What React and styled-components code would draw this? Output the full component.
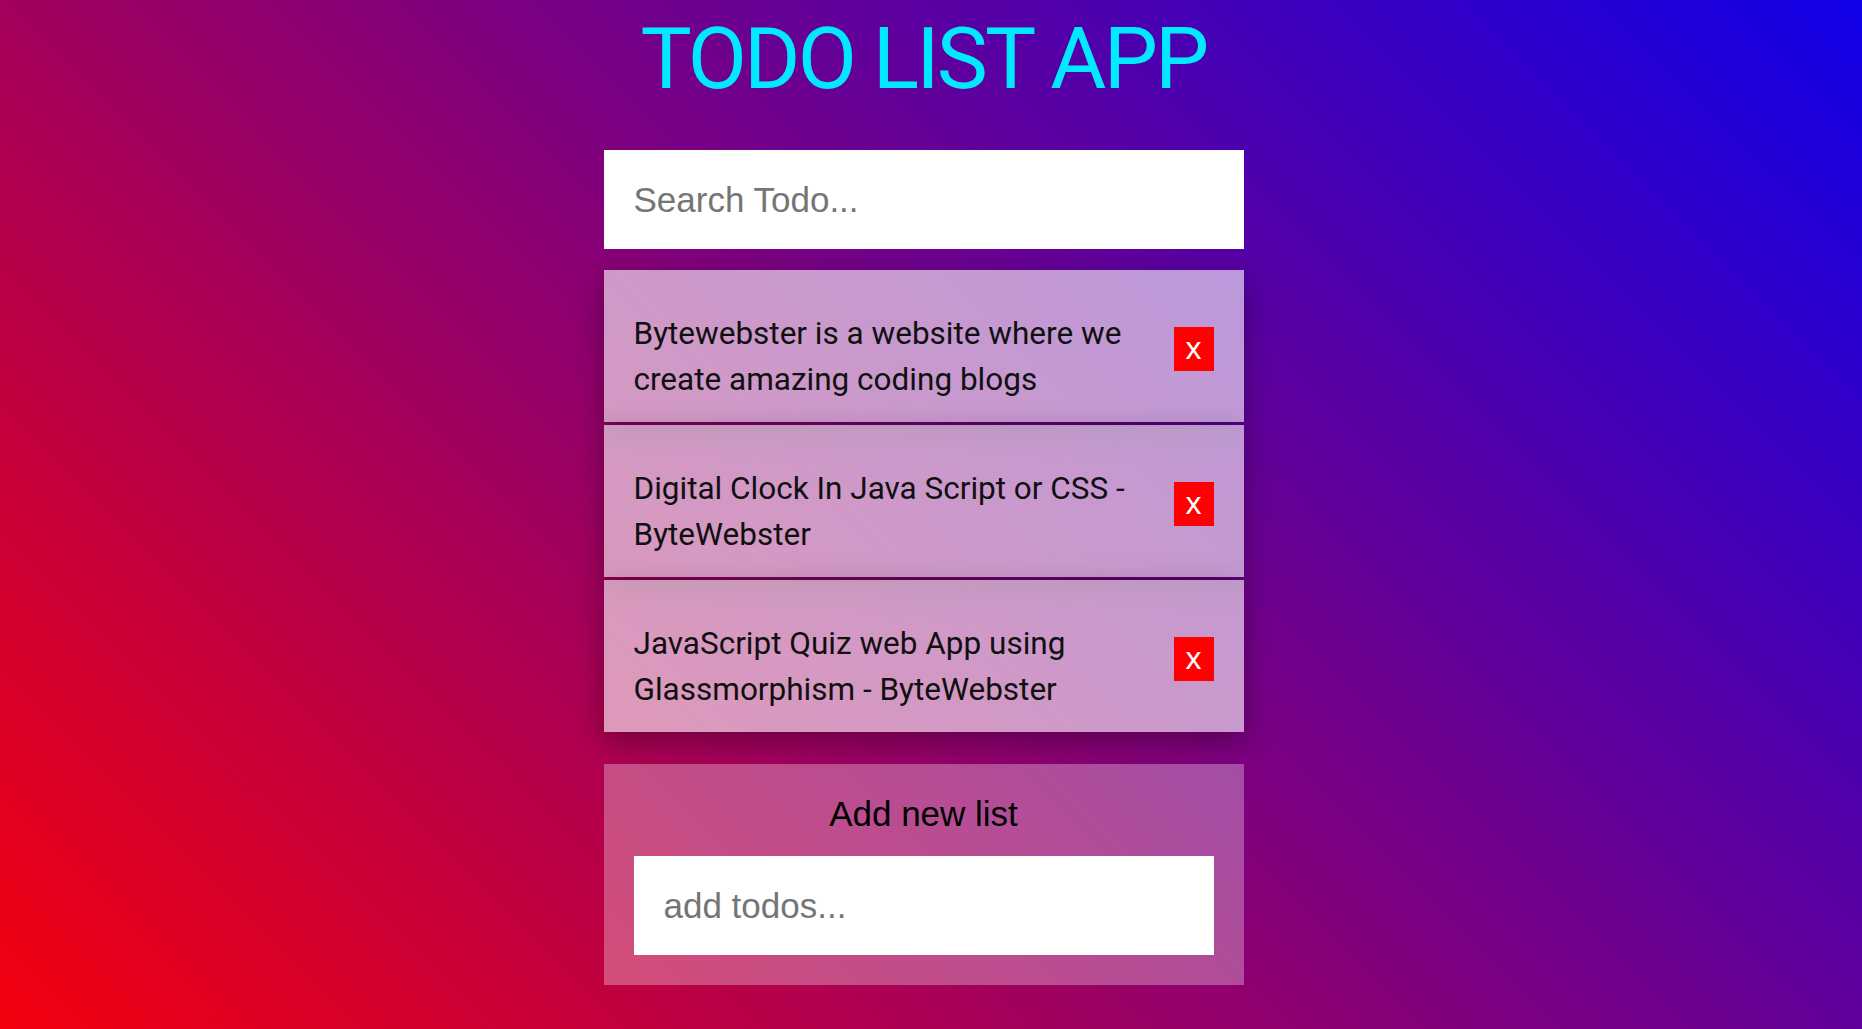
import React, { useState } from 'react';
import styled, { createGlobalStyle } from 'styled-components';

const GlobalStyle = createGlobalStyle`
  html, body {
    margin: 0;
    padding: 0;
  }
  * {
    box-sizing: border-box;
  }
`;

const Page = styled.div`
  min-height: 100vh;
  overflow: hidden;
  display: flex;
  flex-direction: column;
  align-items: center;
  padding: 9px 15px 0 0;
  background: linear-gradient(45deg, #f4000e, #1000e8);
  font-family: Roboto, "Liberation Sans", sans-serif;
`;

const Title = styled.h1`
  margin: 0;
  font-family: Roboto, "Open Sans", sans-serif;
  font-weight: 400;
  font-size: 86px;
  line-height: 100px;
  letter-spacing: -2.8px;
  color: #00eaff;
`;

const Container = styled.div`
  width: 640px;
  margin-top: 41px;
  display: flex;
  flex-direction: column;
`;

const TextInput = styled.input`
  display: block;
  width: 100%;
  height: 99px;
  padding: 0 30px;
  border: none;
  outline: none;
  background: #fff;
  font-family: "Liberation Sans", Arial, sans-serif;
  font-size: 35px;
  color: #222;
  &::placeholder {
    color: #757575;
  }
`;

const TodoList = styled.ul`
  list-style: none;
  margin: 21px 0 0;
  padding: 0;
  display: flex;
  flex-direction: column;
  gap: 3px;
`;

const TodoItem = styled.li`
  height: 152px;
  display: flex;
  align-items: center;
  justify-content: space-between;
  padding: 20px 30px;
  background: rgba(255, 255, 255, 0.6);
  box-shadow: 0 10px 28px rgba(0, 0, 0, 0.32);
`;

const TodoText = styled.span`
  max-width: 510px;
  padding-top: 21px;
  font-family: Roboto, sans-serif;
  font-size: 31.5px;
  line-height: 46px;
  color: #101010;
`;

const DeleteButton = styled.button`
  flex: none;
  width: 40px;
  height: 44px;
  margin-top: 5px;
  display: flex;
  align-items: center;
  justify-content: center;
  padding: 0;
  border: none;
  background: #ff0000;
  color: #fff;
  font-family: "Liberation Sans", Arial, sans-serif;
  font-size: 32px;
  cursor: pointer;
`;

const AddForm = styled.form`
  margin-top: 32px;
  padding: 30px;
  background: rgba(255, 255, 255, 0.3);
`;

const FormHeading = styled.h2`
  margin: 0 0 22px;
  text-align: center;
  font-family: "Liberation Sans", Arial, sans-serif;
  font-weight: 400;
  font-size: 35px;
  line-height: 40px;
  color: #000;
`;

const initialTodos = [
  'Bytewebster is a website where we create amazing coding blogs',
  'Digital Clock In Java Script or CSS - ByteWebster',
  'JavaScript Quiz web App using Glassmorphism - ByteWebster',
];

export default function App() {
  const [todos, setTodos] = useState(initialTodos);
  const [search, setSearch] = useState('');
  const [draft, setDraft] = useState('');

  const shown = todos.filter((t) => t.toLowerCase().includes(search.toLowerCase()));

  const handleAdd = (e) => {
    e.preventDefault();
    if (!draft.trim()) return;
    setTodos([...todos, draft.trim()]);
    setDraft('');
  };

  return (
    <>
      <GlobalStyle />
      <Page>
        <Title>TODO LIST APP</Title>
        <Container>
          <TextInput
            placeholder="Search Todo..."
            value={search}
            onChange={(e) => setSearch(e.target.value)}
          />
          <TodoList>
            {shown.map((todo) => (
              <TodoItem key={todo}>
                <TodoText>{todo}</TodoText>
                <DeleteButton onClick={() => setTodos(todos.filter((t) => t !== todo))}>x</DeleteButton>
              </TodoItem>
            ))}
          </TodoList>
          <AddForm onSubmit={handleAdd}>
            <FormHeading>Add new list</FormHeading>
            <TextInput
              placeholder="add todos..."
              value={draft}
              onChange={(e) => setDraft(e.target.value)}
            />
          </AddForm>
        </Container>
      </Page>
    </>
  );
}
